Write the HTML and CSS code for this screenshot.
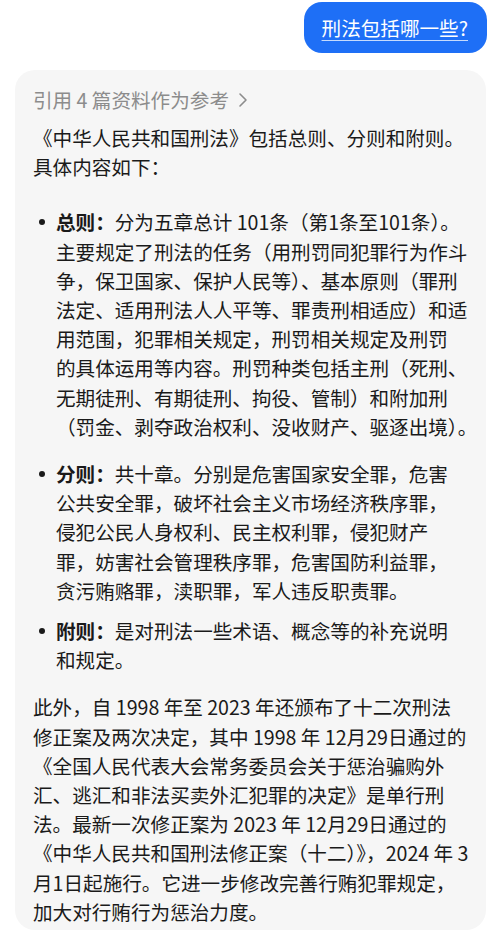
FILE: index.html
```html
<!DOCTYPE html>
<html lang="zh-CN">
<head>
<meta charset="utf-8">
<title>刑法包括哪一些?</title>
<link rel="stylesheet" href="styles.css">
</head>
<body>
<div class="page">
  <div class="row-user">
    <div class="bubble"><span class="q">刑法包括哪一些?</span></div>
  </div>
  <div class="card">
    <div class="refs">引用 4 篇资料作为参考<svg class="chev" width="10" height="16" viewBox="0 0 10 16"><path d="M2 2 L8 8 L2 14" fill="none" stroke="#8c8c8c" stroke-width="1.6" stroke-linecap="round" stroke-linejoin="round"/></svg></div>
    <p class="para p1">《中华人民共和国刑法》包括总则、分则和附则。<br>具体内容如下：</p>
    <ul class="list">
      <li class="item i1"><span class="dot-col"><span class="dot"></span></span><span class="txt"><b>总则：</b>分为五章总计 101条（第1条至101条）。<br>主要规定了刑法的任务（用刑罚同犯罪行为作斗<br>争，保卫国家、保护人民等）、基本原则（罪刑<br>法定、适用刑法人人平等、罪责刑相适应）和适<br>用范围，犯罪相关规定，刑罚相关规定及刑罚<br>的具体运用等内容。刑罚种类包括主刑（死刑、<br>无期徒刑、有期徒刑、拘役、管制）和附加刑<br>（罚金、剥夺政治权利、没收财产、驱逐出境）。</span></li>
      <li class="item i2"><span class="dot-col"><span class="dot"></span></span><span class="txt"><b>分则：</b>共十章。分别是危害国家安全罪，危害<br>公共安全罪，破坏社会主义市场经济秩序罪，<br>侵犯公民人身权利、民主权利罪，侵犯财产<br>罪，妨害社会管理秩序罪，危害国防利益罪，<br>贪污贿赂罪，渎职罪，军人违反职责罪。</span></li>
      <li class="item i3"><span class="dot-col"><span class="dot"></span></span><span class="txt"><b>附则：</b>是对刑法一些术语、概念等的补充说明<br>和规定。</span></li>
    </ul>
    <p class="para p2">此外，自 1998 年至 2023 年还颁布了十二次刑法<br>修正案及两次决定，其中 1998 年 12月29日通过的<br>《全国人民代表大会常务委员会关于惩治骗购外<br>汇、逃汇和非法买卖外汇犯罪的决定》是单行刑<br>法。最新一次修正案为 2023 年 12月29日通过的<br>《中华人民共和国刑法修正案（十二）》，2024 年 3<br>月1日起施行。它进一步修改完善行贿犯罪规定，<br>加大对行贿行为惩治力度。</p>
  </div>
</div>
</body>
</html>
```

FILE: styles.css
```css
html, body {
  margin: 0;
  padding: 0;
  background: #ffffff;
}
body {
  font-family: "Noto Sans CJK SC", "Noto Sans", sans-serif;
  color: #1a1a1a;
  font-size: 19.6px;
  line-height: 29.2px;
}
.page {
  width: 500px;
  overflow: hidden;
}
.row-user {
  display: flex;
  justify-content: flex-end;
  padding: 2px 13px 0 0;
}
.bubble {
  background: #1e6ff6;
  color: #ffffff;
  border-radius: 18px;
  padding: 11px 19px 11px 18px;
  white-space: nowrap;
  line-height: 29px;
}
.q {
  text-decoration: underline;
  text-decoration-color: rgba(255,255,255,0.75);
  text-decoration-thickness: 1px;
  text-underline-offset: 4px;
}
.card {
  margin: 17px 14px 0 15px;
  background: #f6f6f6;
  border-radius: 20px;
  padding: 15px 12px 4px 18px;
}
.refs {
  color: #8c8c8c;
  font-size: 19.6px;
  line-height: 29px;
  display: flex;
  align-items: center;
  white-space: nowrap;
}
.chev {
  margin-left: 9px;
}
.para {
  margin: 0;
  white-space: nowrap;
}
.p1 {
  margin-top: 9px;
}
.list {
  list-style: none;
  margin: 26px 0 0 0;
  padding: 0;
}
.item {
  display: flex;
  white-space: nowrap;
}
.i2 {
  margin-top: 18px;
}
.i3 {
  margin-top: 11px;
}
.dot-col {
  width: 23px;
  flex: none;
  display: flex;
  justify-content: flex-start;
  padding-top: 12px;
  height: 17px;
}
.dot {
  width: 6px;
  height: 6px;
  border-radius: 50%;
  background: #1a1a1a;
  margin-left: 6px;
}
.txt b {
  font-weight: 700;
}
.p2 {
  margin-top: 18px;
}
```
